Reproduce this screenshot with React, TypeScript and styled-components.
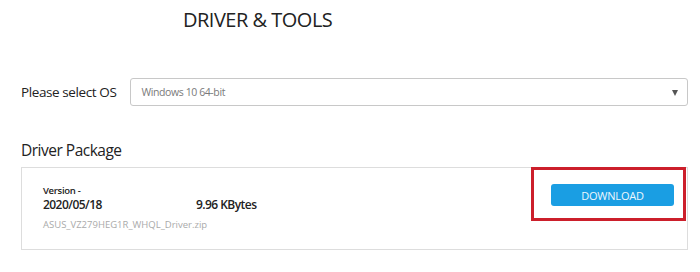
import React from "react";
import styled, { createGlobalStyle } from "styled-components";

const Global = createGlobalStyle`
  html, body { margin: 0; padding: 0; background: #fff; }
  body { font-family: "Open Sans", "Noto Sans", Arial, sans-serif; color: #222; }
  * { box-sizing: border-box; }
`;

const Page = styled.div`
  width: 700px;
  height: 272px;
  padding: 6px 12px 0 21px;
  display: flex;
  flex-direction: column;
`;

const Title = styled.h1`
  margin: 0 0 0 162px;
  font-size: 20px;
  line-height: 28px;
  font-weight: 400;
  letter-spacing: -0.5px;
  color: #222;
`;

const OsRow = styled.div`
  margin-top: 44px;
  display: flex;
  align-items: center;
  gap: 14px;
`;

const Label = styled.span`
  font-size: 13.5px;
  letter-spacing: -0.4px;
  color: #222;
`;

const Select = styled.div`
  flex: 1;
  height: 28px;
  border: 1px solid #c8c8c8;
  border-radius: 3px;
  display: flex;
  align-items: center;
  justify-content: space-between;
  padding: 0 9px 0 10px;
  font-size: 10.5px;
  letter-spacing: -0.4px;
  color: #7a7a7a;
`;

const Arrow = styled.span`
  width: 0;
  height: 0;
  border-left: 3.5px solid transparent;
  border-right: 3.5px solid transparent;
  border-top: 6px solid #555;
  margin-top: 1px;
`;

const SectionTitle = styled.h2`
  margin: 33px 0 0 0;
  font-size: 15.5px;
  line-height: 22px;
  font-weight: 400;
  letter-spacing: -0.5px;
  color: #222;
`;

const Card = styled.div`
  margin-top: 6px;
  height: 83px;
  border: 1px solid #ddd;
  display: flex;
  justify-content: space-between;
  align-items: flex-start;
  padding: 0 1px 0 21px;
`;

const Info = styled.div`
  padding-top: 16px;
  display: grid;
  grid-template-columns: 153px auto;
`;

const VersionLabel = styled.div`
  grid-column: 1 / span 2;
  font-size: 9.5px;
  line-height: 13px;
  font-weight: 600;
  letter-spacing: -0.3px;
  color: #222;
`;

const Strong = styled.div`
  font-size: 12px;
  line-height: 15px;
  font-weight: 600;
  letter-spacing: -0.55px;
  color: #222;
`;

const FileName = styled.div`
  grid-column: 1 / span 2;
  margin-top: 7px;
  font-size: 9.5px;
  line-height: 12px;
  color: #aaa;
`;

const Highlight = styled.div`
  margin-top: -1px;
  width: 155px;
  height: 54px;
  border: 3px solid #cc1f2b;
  padding: 14px 9px 0 17px;
`;

const Button = styled.button`
  width: 123px;
  height: 22px;
  border: none;
  border-radius: 3px;
  background: #1a9ee3;
  color: #eef7fd;
  font-family: "Open Sans", Arial, sans-serif;
  font-size: 11px;
  letter-spacing: -0.2px;
  padding: 0;
  display: flex;
  align-items: center;
  justify-content: center;
`;

export default function App() {
  return (
    <>
      <Global />
      <Page>
        <Title>DRIVER &amp; TOOLS</Title>
        <OsRow>
          <Label>Please select OS</Label>
          <Select>
            <span>Windows 10 64-bit</span>
            <Arrow />
          </Select>
        </OsRow>
        <SectionTitle>Driver Package</SectionTitle>
        <Card>
          <Info>
            <VersionLabel>Version -</VersionLabel>
            <Strong>2020/05/18</Strong>
            <Strong>9.96 KBytes</Strong>
            <FileName>ASUS_VZ279HEG1R_WHQL_Driver.zip</FileName>
          </Info>
          <Highlight>
            <Button>DOWNLOAD</Button>
          </Highlight>
        </Card>
      </Page>
    </>
  );
}
